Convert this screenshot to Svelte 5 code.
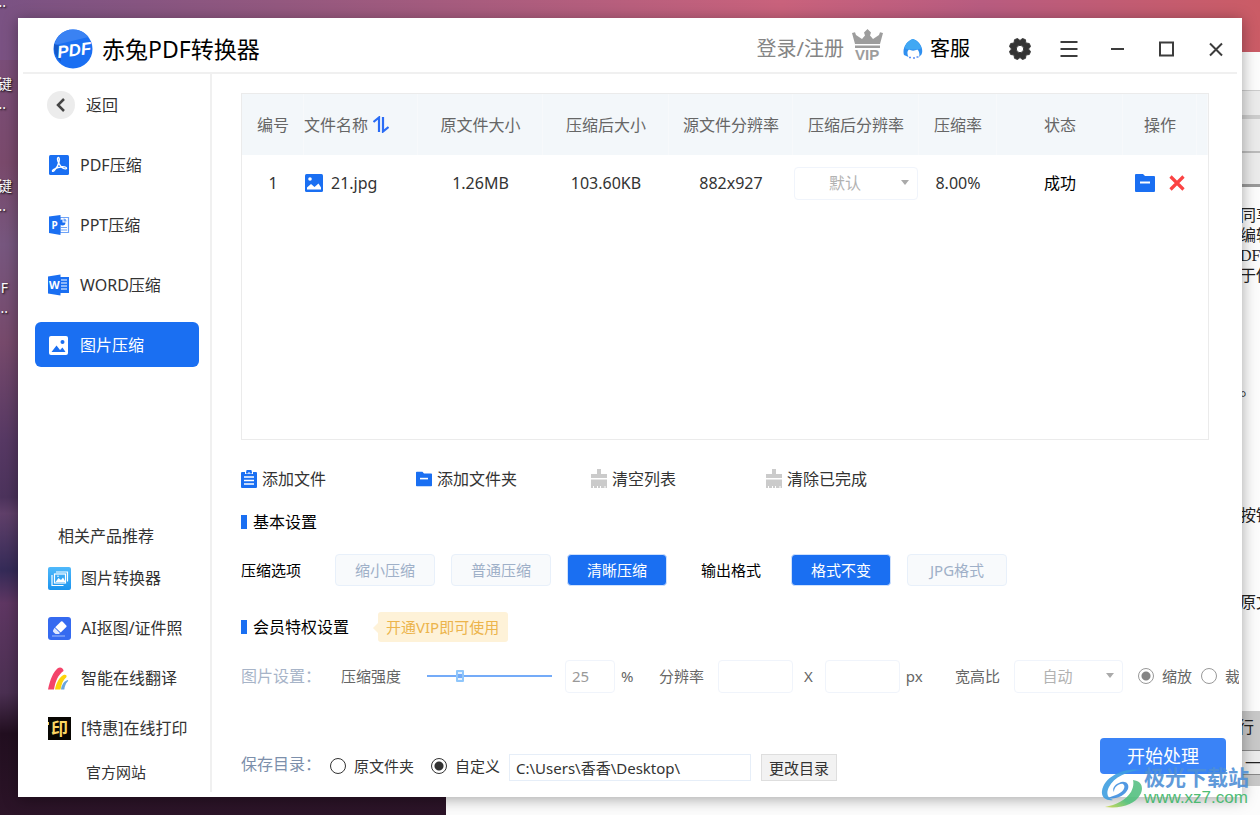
<script lang="ts">
  interface FileRow {
    name: string;
    size: string;
    compressed: string;
    resolution: string;
    ratio: string;
    status: string;
  }

  const files: FileRow[] = [
    {
      name: "21.jpg",
      size: "1.26MB",
      compressed: "103.60KB",
      resolution: "882x927",
      ratio: "8.00%",
      status: "成功",
    },
  ];

  const navItems = [
    { key: "pdf", label: "PDF压缩" },
    { key: "ppt", label: "PPT压缩" },
    { key: "word", label: "WORD压缩" },
    { key: "image", label: "图片压缩" },
  ];

  const products = [
    { key: "convert", label: "图片转换器" },
    { key: "cutout", label: "AI抠图/证件照" },
    { key: "translate", label: "智能在线翻译" },
    { key: "print", label: "[特惠]在线打印" },
  ];

  const toolbar = [
    { icon: "clipboard", label: "添加文件" },
    { icon: "folder", label: "添加文件夹" },
    { icon: "brush", label: "清空列表" },
    { icon: "brush", label: "清除已完成" },
  ];

  const levels = ["缩小压缩", "普通压缩", "清晰压缩"];
  const formats = ["格式不变", "JPG格式"];

  let activeNav: string = $state("image");
  let level: string = $state("清晰压缩");
  let format: string = $state("格式不变");
  let strength: number = $state(25);
  let width: string = $state("");
  let height: string = $state("");
  let resize: string = $state("scale");
  let target: string = $state("custom");
  let savePath: string = $state("C:\\Users\\香香\\Desktop\\");
</script>

{#snippet folderIcon(size: number)}
  <svg width={size} height={size} viewBox="0 0 20 20">
    <path d="M1 1h7l2 2h9q1 0 1 1v14q0 1-1 1H1q-1 0-1-1V2q0-1 1-1z" fill="#1a6ff2" />
    <path d="M5 9.5h10" stroke="#fff" stroke-width="2" />
  </svg>
{/snippet}

{#snippet navIcon(key: string)}
  <svg width="22" height="22" viewBox="0 0 22 22">
    {#if key === "pdf"}
      <rect x="1" y="1" width="20" height="20" rx="1.5" fill="#1a6ff2" />
      <path
        d="M10.5 3.5c-1.500 0-1.200 3 .2 5.500 1.800 3.500 4 5.800 6.500 5.900 1.800 0 1.800-1.600-.4-2-3.500-.6-8.500.8-11.300 2.600-1.900 1.300-1 2.700.6 1.300 2-1.900 4.200-5.800 4.900-8.800.4-2 .5-4.300-.5-4.500z"
        fill="none"
        stroke="#fff"
        stroke-width="1.4"
      />
    {:else if key === "ppt"}
      <path d="M12 3.500h8.500v15H12z" fill="#fff" stroke="#6fa3f7" stroke-width="1.200" />
      <path d="M14.500 5.500a3 3 0 1 0 3 3h-3z" fill="#1a6ff2" />
      <path d="M15.500 4.600a3 3 0 0 1 3 3h-3z" fill="#6fa3f7" />
      <path d="M13 13.500h6M13 16h6" stroke="#6fa3f7" stroke-width="1.200" />
      <path d="M1 2.500L12.500 1v20L1 19z" fill="#1a6ff2" />
      <text x="3.500" y="14.500" font-size="10" font-weight="700" fill="#fff">P</text>
    {:else if key === "word"}
      <path d="M12 3h9v16h-9z" fill="#1a6ff2" />
      <path d="M13 6h6M13 9h6M13 12h6M13 15h6" stroke="#fff" stroke-width="1.200" />
      <path d="M0 2.500L12.500 0.500v21L0 19.500z" fill="#1a6ff2" />
      <text x="1" y="14.500" font-size="11" font-weight="700" fill="#fff">W</text>
    {:else}
      <rect x="1" y="2" width="19" height="19" rx="2" fill="#fff" />
      <circle cx="14.500" cy="8" r="2" fill="#1a6ff2" />
      <path d="M3.500 18l5-6.500 3.500 4.500 2.500-2.500 3 4.500z" fill="#1a6ff2" />
    {/if}
  </svg>
{/snippet}

{#snippet productIcon(key: string)}
  <svg width="23" height="23" viewBox="0 0 23 23">
    {#if key === "convert"}
      <defs>
        <linearGradient id="sky" x2="0" y2="1">
          <stop offset="0" stop-color="#4fb9fb" />
          <stop offset="1" stop-color="#1b94ee" />
        </linearGradient>
      </defs>
      <rect width="23" height="23" rx="2" fill="url(#sky)" />
      <path d="M8 5h11.500v9.500M4 8v10.500h11.500" fill="none" stroke="#fff" stroke-width="1.200" />
      <rect x="6.500" y="7" width="11" height="9" fill="none" stroke="#fff" stroke-width="1.200" />
      <path d="M7.500 15l3-4 2.500 2 2-2.500 2.500 4.500z" fill="#fff" />
      <circle cx="10" cy="9.300" r="0.800" fill="#fff" />
    {:else if key === "cutout"}
      <rect width="23" height="23" rx="3" fill="#356af0" />
      <path d="M13 4.500q.8-.6 1.500.1l3.800 3.900q.6.700 0 1.400l-5.600 5.600-5.500-5.300z" fill="#fff" />
      <path d="M6.600 10.800l5.400 5.300-1 1H7.500l-2.200-2.200q-.8-.9 0-1.800z" fill="#dfe8ff" />
      <path d="M4 19h13" stroke="#8fb0fa" stroke-width="1.200" />
    {:else if key === "translate"}
      <path d="M0 22.500C2 13 5 5 10 1c2.500-1.500 5.800.2 5.500 3C10 8 7.500 14 6 22.500z" fill="#f4446a" />
      <path d="M7 22.500c1-6 4-12 8.500-14.500 2-.8 3.500 0 3 2-3.500 3-5 7-6 12.500z" fill="#fdd30b" />
      <path d="M13 22.500c.5-4 2.500-8 6.500-9.500q1.500.5-.3 2c-1.700 2-2.500 4.500-2.900 7.500z" fill="#6ba6dc" />
    {:else}
      <rect width="23" height="23" fill="#080602" />
      <text x="3" y="18" font-size="17" font-weight="700" fill="#fbd663">印</text>
      <path d="M0 5h1v3H0z" fill="#fbd663" />
    {/if}
  </svg>
{/snippet}

{#snippet toolIcon(icon: string)}
  {#if icon === "folder"}
    {@render folderIcon(16)}
  {:else if icon === "clipboard"}
    <svg width="16" height="18" viewBox="0 0 16 18">
      <path d="M1 2h3v2h8V2h3q1 0 1 1v14q0 1-1 1H1q-1 0-1-1V3q0-1 1-1z" fill="#1a6ff2" />
      <path d="M5 2.500h1.500V1h3v1.500H11" fill="none" stroke="#1a6ff2" stroke-width="2" />
      <path d="M3 7h10M3 10.500h10M3 14h10" stroke="#fff" stroke-width="1.300" />
    </svg>
  {:else}
    <svg width="16" height="20" viewBox="0 0 16 20">
      <path d="M6 0h4v5h6v4H0V5h6zM0 10.500h16V19h-1.500v-2h-1v2H10v-2H9v2H7v-2H6v2H3v-2H2v2H0z" fill="#cbcbcb" />
    </svg>
  {/if}
{/snippet}

<div class="desktop">
  <div class="shortcuts">
    {#each ["键", "键", "键", "F"] as name}
      <span class="shortcut">{name}<span class="more">..</span></span>
    {/each}
  </div>

  <div class="back-window">
    <div class="peek">
      <div class="strip tabs"></div>
      <div class="strip"></div>
      <div class="strip last"></div>
      <p class="doc">同享<br />编辑<br />DF转<br />于使</p>
      <p class="doc dot">。</p>
      <p class="doc press">按钮</p>
      <p class="doc source">原文</p>
      <div class="find">行</div>
      <div class="dash">—</div>
      <div class="status"></div>
    </div>
  </div>

  <div class="window">
    <header>
      <svg class="logo" width="40" height="40" viewBox="0 0 40 40">
        <circle cx="20" cy="20" r="19.500" fill="#1a6ff2" />
        <path d="M1 17C3 8 10 .500 20 .500c7 0 12 3 15.500 7.500L2 16z" fill="#3a82f3" />
        <path d="M1 15l5 1.500L8 33Q0 26 1 15z" fill="#1559c8" />
        <text x="4" y="27" font-size="17" transform="rotate(-7 20 20)">PDF</text>
      </svg>
      <h1>赤兔PDF转换器</h1>
      <a class="login" href="#login">登录/注册</a>
      <svg class="crown" width="31" height="33" viewBox="0 0 31 33">
        <path
          d="M0 5l3-.700 1 2.700 6 4 3-3.500-1-3L15.500 1l3.500 3.500-1 3L21 11l6-4 1-2.700 3 .700-3 11H3zM3 17.500h25V20H3z"
          fill="#9d9d9d"
        />
        <text x="3" y="32" font-size="15">VIP</text>
      </svg>
      <button class="support">
        <svg width="20" height="22" viewBox="0 0 20 22">
          <path
            d="M1 17C-1 11 3 3 10 1c7 2 11 10 8.500 15.500L16 19c1-3 0-6-1.500-7.500-3 1.500-6 1.500-8.500 0C4 13 4 16 5.500 19z"
            fill="#2f8ff0"
          />
          <path d="M1.500 10C3 5 6 2.500 10 1c4 1.500 7 4.500 8.300 9-2 2-14 2-16.800 0z" fill="#41a8f3" />
          <path d="M6 19.500h2M10 20h2M13.500 19h2" stroke="#5b8ff5" stroke-width="1.500" />
        </svg>
        客服
      </button>
      <div class="controls">
        <button aria-label="设置">
          <svg width="24" height="24" viewBox="0 0 24 24" fill="#333">
            <path
              fill-rule="evenodd"
              d="M9.500 1.500L12 3.500 14.500 1.500 17.500 2.700 17.800 5.900 21.300 6.500 22.500 9.500 20.500 12 22.500 14.500 21.300 17.500 18 18 17.500 21.300 14.500 22.500 12 20.500 9.500 22.500 6.500 21.300 6 18 2.700 17.500 1.500 14.500 3.500 12 1.500 9.500 2.700 6.500 6 6 6.500 2.700zM12 8.300a3.700 3.700 0 1 0 0 7.400 3.700 3.700 0 0 0 0-7.400z"
              stroke="#333"
              stroke-linejoin="round"
            />
          </svg>
        </button>
        <button aria-label="菜单">
          <svg width="24" height="24" viewBox="0 0 24 24"><path d="M3.500 5h17M3.500 12h17M3.500 19h17" /></svg>
        </button>
        <button aria-label="最小化">
          <svg width="24" height="24" viewBox="0 0 24 24"><path d="M5 12h13" /></svg>
        </button>
        <button aria-label="最大化">
          <svg width="24" height="24" viewBox="0 0 24 24"><path d="M5 5.500h13v13H5z" /></svg>
        </button>
        <button aria-label="关闭">
          <svg width="24" height="24" viewBox="0 0 24 24"><path d="M6 6.500l12 12M18 6.500l-12 12" /></svg>
        </button>
      </div>
    </header>

    <div class="body">
      <aside>
        <button class="back">
          <svg width="28" height="28" viewBox="0 0 28 28">
            <circle cx="14" cy="14" r="14" fill="#ececec" />
            <path d="M17 8l-6 6 6 6" fill="none" stroke="#444" stroke-width="2.500" />
          </svg>
          返回
        </button>
        <nav>
          {#each navItems as item}
            <button class="nav-item" class:active={item.key === activeNav} onclick={() => (activeNav = item.key)}>
              {@render navIcon(item.key)}
              {item.label}
            </button>
          {/each}
        </nav>

        <div class="related">
          <h2>相关产品推荐</h2>
          {#each products as product}
            <a class="product" href="#{product.key}">
              {@render productIcon(product.key)}
              {product.label}
            </a>
          {/each}
          <a class="site" href="#site">官方网站</a>
        </div>
      </aside>

      <main>
        <div class="table-box">
          <table>
            <colgroup>
              <col style="width: 62px" />
              <col style="width: 114px" />
              <col style="width: 125px" />
              <col style="width: 126px" />
              <col style="width: 124px" />
              <col style="width: 126px" />
              <col style="width: 78px" />
              <col style="width: 126px" />
              <col style="width: 74px" />
              <col style="width: 11px" />
            </colgroup>
            <thead>
              <tr>
                <th>编号</th>
                <th class="name">
                  <span class="with-icon sort">
                    文件名称
                    <svg width="16" height="17" viewBox="0 0 16 17" fill="none" stroke="#2a6cf5" stroke-width="2.200">
                      <path d="M0.500 6L6 1.500V16M15.500 11L10 15.500V1" />
                    </svg>
                  </span>
                </th>
                <th>原文件大小</th>
                <th>压缩后大小</th>
                <th>源文件分辨率</th>
                <th>压缩后分辨率</th>
                <th>压缩率</th>
                <th>状态</th>
                <th>操作</th>
                <th></th>
              </tr>
            </thead>
            <tbody>
              {#each files as file, i}
                <tr>
                  <td>{i + 1}</td>
                  <td class="name">
                    <span class="with-icon">
                      <svg width="20" height="20" viewBox="0 0 20 20">
                        <rect x="1" y="1" width="18" height="18" rx="1.500" fill="#1a6ff2" />
                        <circle cx="6" cy="6" r="1.800" fill="#fff" />
                        <path d="M3 16.500v-2l4-3.500 3.500 3 4-3.500 2.500 4v2z" fill="#fff" />
                      </svg>
                      {file.name}
                    </span>
                  </td>
                  <td>{file.size}</td>
                  <td>{file.compressed}</td>
                  <td>{file.resolution}</td>
                  <td class="pick">
                    <span class="select">
                      <select aria-label="压缩后分辨率"><option>默认</option></select>
                    </span>
                  </td>
                  <td>{file.ratio}</td>
                  <td class="status-cell">{file.status}</td>
                  <td>
                    <span class="actions">
                      <button aria-label="打开文件夹">{@render folderIcon(20)}</button>
                      <button aria-label="删除">
                        <svg width="16" height="16" viewBox="0 0 16 16">
                          <path d="M1.500 1.500l13 13M14.500 1.500l-13 13" stroke="#fb4343" stroke-width="3.200" />
                        </svg>
                      </button>
                    </span>
                  </td>
                  <td></td>
                </tr>
              {/each}
            </tbody>
          </table>
        </div>

        <div class="toolbar">
          {#each toolbar as tool}
            <button>
              {@render toolIcon(tool.icon)}
              {tool.label}
            </button>
          {/each}
        </div>

        <h3 class="section">基本设置</h3>

        <div class="options">
          <span class="caption">压缩选项</span>
          <div class="choices">
            {#each levels as item}
              <button class="choice" class:chosen={item === level} onclick={() => (level = item)}>{item}</button>
            {/each}
          </div>
          <span class="caption">输出格式</span>
          <div class="choices">
            {#each formats as item}
              <button class="choice" class:chosen={item === format} onclick={() => (format = item)}>{item}</button>
            {/each}
          </div>
        </div>

        <div class="vip-title">
          <h3 class="section">会员特权设置</h3>
          <button class="vip-tag">开通VIP即可使用</button>
        </div>

        <div class="settings">
          <span class="row-label">图片设置：</span>
          <div class="field strength">
            <label for="strength">压缩强度</label>
            <input id="strength" type="range" min="0" max="100" bind:value={strength} />
            <input class="box small" type="text" aria-label="压缩强度百分比" bind:value={strength} />
            <span class="unit">%</span>
          </div>
          <div class="field resolution">
            <label for="width">分辨率</label>
            <input id="width" class="box" type="text" bind:value={width} />
            <span class="times">X</span>
            <input class="box" type="text" aria-label="高度" bind:value={height} />
            <span class="unit">px</span>
          </div>
          <div class="field ratio">
            <label for="aspect">宽高比</label>
            <span class="select">
              <select id="aspect"><option>自动</option></select>
            </span>
          </div>
          <label class="radio"><input type="radio" name="resize" value="scale" bind:group={resize} />缩放</label>
          <label class="radio"><input type="radio" name="resize" value="crop" bind:group={resize} />裁剪</label>
        </div>

        <footer>
          <span class="row-label">保存目录：</span>
          <label class="radio"><input type="radio" name="target" value="source" bind:group={target} />原文件夹</label>
          <label class="radio"><input type="radio" name="target" value="custom" bind:group={target} />自定义</label>
          <input class="path" type="text" aria-label="保存目录" bind:value={savePath} />
          <button class="change">更改目录</button>
          <button class="start">开始处理</button>
        </footer>
      </main>
    </div>
  </div>

  <div class="watermark">
    <svg width="42" height="40" viewBox="0 0 42 40">
      <defs>
        <linearGradient id="leaf" x1="1" x2="0" y2="1">
          <stop offset="0" stop-color="#5cc08a" />
          <stop offset="0.600" stop-color="#4fc07a" />
          <stop offset="1" stop-color="#d3da4a" />
        </linearGradient>
      </defs>
      <path d="M41 2C24-1 3 8 1 23c-1 7 5 10 11 9C6 30 5 25 8 19 13 9 26 3 41 2z" fill="#3f9fe0" />
      <path d="M7 30c7 2 17-2 20-9 2-6-4-9-9-6-5 2-7 6-5 9 0-5 5-9 9-8 4 3-1 9-7 11-3 1-6 2-8 3z" fill="#3f8fe0" />
      <path d="M32 12c9 1 11 8 7 15-5 9-18 14-35 12 11-2 21-7 26-15 2-4 3-8 2-12z" fill="url(#leaf)" />
    </svg>
    <div>
      <div class="mark-name">极光下载站</div>
      <div class="mark-url">www.xz7.com</div>
    </div>
  </div>
</div>

<style>
  :global(body) {
    margin: 0;
  }

  .desktop {
    position: relative;
    box-sizing: border-box;
    min-height: 100vh;
    padding: 18px;
    overflow: hidden;
    display: flex;
    font-family: "Noto Sans", "Noto Sans CJK SC", sans-serif;
    font-size: 16px;
    line-height: 20px;
    color: #333;
    background:
      linear-gradient(90deg, #7a5283, #93587f 22%, #c9627c 62%, #b85c80 78%, #cb5c66) 0 0 / 100% 60px no-repeat,
      linear-gradient(
        #7a5080,
        #7a4a6c 20%,
        #77577f 30%,
        #774a6c 42%,
        #573964 54%,
        #4c335c 61%,
        #60406a 63%,
        #352b58 70%,
        #5f3763 74%,
        #4b3052 85%,
        #220f20 90%,
        #2c1428
      );
  }

  h1,
  h2,
  h3,
  p {
    margin: 0;
    font-weight: 400;
  }

  button {
    padding: 0;
    border: none;
    background: none;
    font: inherit;
    color: inherit;
    cursor: pointer;
  }

  input,
  select {
    box-sizing: border-box;
    margin: 0;
    font: inherit;
    color: inherit;
  }

  a {
    color: inherit;
    text-decoration: none;
  }

  svg {
    display: block;
    flex: none;
  }

  .shortcuts {
    position: absolute;
    left: -8px;
    top: -28px;
    width: 20px;
    display: flex;
    flex-direction: column;
    gap: 62px;
    color: #fff;
    text-shadow: 1px 1px 2px #000;
  }

  .shortcut {
    font-size: 14px;
    text-align: right;
  }

  .shortcut:last-child {
    padding-right: 4px;
  }

  .more {
    display: block;
    padding-right: 6px;
  }

  .shortcut:last-child .more {
    padding-right: 0;
  }

  .back-window {
    position: absolute;
    left: 446px;
    right: 0;
    top: 52px;
    bottom: 0;
    display: flex;
    justify-content: flex-end;
    background: #fcfcfc;
  }

  .peek {
    width: 22px;
    padding-top: 38px;
    overflow: hidden;
    white-space: nowrap;
    color: #222;
  }

  .strip {
    box-sizing: border-box;
    height: 34px;
    border-bottom: 2px solid #bbb;
    background: #ebebeb;
  }

  .strip.tabs {
    height: 29px;
    border-top: 1px solid #ccc;
    border-bottom: 4px solid #ccc;
  }

  .strip.last {
    border-bottom: 3px solid #999;
  }

  .doc {
    margin-top: 19px;
    padding-left: 2px;
    font-family: "Liberation Serif", "Noto Sans CJK SC", serif;
  }

  .doc.dot {
    margin-top: 94px;
  }

  .doc.press {
    margin-top: 106px;
  }

  .doc.source {
    margin-top: 67px;
  }

  .find {
    box-sizing: border-box;
    height: 39px;
    margin-top: 98px;
    padding-top: 6px;
    background: #c8c8c8;
  }

  .dash {
    height: 23px;
    padding-left: 7px;
    border: solid #888;
    border-width: 1px 0;
    background: #ebebeb;
  }

  .status {
    height: 11px;
    background: #c8c8c8;
  }

  .window {
    position: relative;
    flex: 1;
    min-width: 0;
    display: flex;
    flex-direction: column;
    background: #fff;
    box-shadow: 0 2px 14px rgba(0, 0, 0, 0.35);
  }

  header {
    box-sizing: border-box;
    display: flex;
    align-items: center;
    height: 56px;
    margin: 0 5px;
    padding: 7px 9px 0 30px;
    border-bottom: 2px solid #f0f0f0;
  }

  .logo text {
    font-family: "Liberation Sans", sans-serif;
    font-weight: 700;
    font-style: italic;
    fill: #fff;
  }

  h1 {
    margin-left: 9px;
    font-size: 23px;
    line-height: 32px;
    color: #000;
  }

  .login {
    margin-left: auto;
    font-size: 20px;
    line-height: 28px;
    color: #858585;
  }

  .crown {
    margin: -8px 20px 0 8px;
  }

  .crown text {
    font-family: "Liberation Sans", sans-serif;
    font-weight: 700;
    fill: #9d9d9d;
  }

  .support {
    display: flex;
    align-items: center;
    gap: 7px;
    font-size: 20px;
    line-height: 28px;
    color: #000;
  }

  .controls {
    display: flex;
    gap: 25px;
    margin-left: 38px;
  }

  .controls path {
    fill: none;
    stroke: #3c3c3c;
    stroke-width: 2;
  }

  .controls button:first-child path {
    fill: #333;
    stroke-width: 1;
  }

  .body {
    flex: 1;
    display: flex;
  }

  aside {
    box-sizing: border-box;
    flex: none;
    width: 194px;
    margin-bottom: 5px;
    padding: 8px 11px 0 17px;
    border-right: 2px solid #f0f0f0;
    display: flex;
    flex-direction: column;
  }

  .back {
    display: flex;
    align-items: center;
    gap: 11px;
    height: 45px;
    padding-left: 12px;
  }

  nav {
    display: flex;
    flex-direction: column;
    gap: 15px;
    margin-top: 15px;
  }

  .nav-item {
    display: flex;
    align-items: center;
    gap: 10px;
    height: 45px;
    padding-left: 13px;
    border-radius: 6px;
  }

  .nav-item.active {
    background: #1a6ff2;
    color: #fff;
  }

  .related {
    margin-top: auto;
    padding-left: 13px;
    display: flex;
    flex-direction: column;
  }

  h2 {
    padding-left: 10px;
    font-size: 16px;
    line-height: 34px;
  }

  .product {
    display: flex;
    align-items: center;
    gap: 10px;
    height: 50px;
    white-space: nowrap;
  }

  .site {
    padding-left: 38px;
    font-size: 15px;
    line-height: 39px;
  }

  main {
    flex: 1;
    min-width: 0;
    display: flex;
    flex-direction: column;
    padding: 19px 0 16px 29px;
  }

  .table-box {
    flex: 1;
    min-height: 200px;
    margin-right: 33px;
    border: 1px solid #ebebeb;
  }

  table {
    width: 100%;
    table-layout: fixed;
    border-collapse: separate;
    border-spacing: 0;
  }

  th,
  td {
    padding: 0;
    text-align: center;
    white-space: nowrap;
  }

  th {
    height: 61px;
    font-weight: 400;
    color: #666;
    background: #f3f7fa;
    box-shadow: inset -1px 0 #f7f9fb;
  }

  td {
    height: 56px;
  }

  .with-icon {
    display: flex;
    align-items: center;
    gap: 7px;
  }

  .sort {
    gap: 5px;
  }

  .status-cell {
    color: #000;
  }

  .pick .select {
    width: 124px;
  }

  .actions {
    display: flex;
    justify-content: center;
    align-items: center;
    gap: 14px;
  }

  .select {
    position: relative;
    display: inline-block;
    vertical-align: middle;
  }

  .select select {
    display: block;
    width: 100%;
    height: 33px;
    padding: 0 22px 0 0;
    border: 1px solid #f0f4fb;
    border-radius: 4px;
    background: #fff;
    appearance: none;
    text-align: center;
    text-align-last: center;
    color: #b2b2b2;
  }

  .select::after {
    content: "";
    position: absolute;
    right: 9px;
    top: 13px;
    border: solid transparent;
    border-width: 5px 4px 0;
    border-top-color: #aaa;
  }

  .toolbar {
    display: flex;
    margin-top: 24px;
  }

  .toolbar button {
    display: flex;
    align-items: center;
    gap: 5px;
    width: 175px;
    height: 30px;
  }

  .section {
    display: flex;
    align-items: center;
    gap: 6px;
    height: 32px;
    margin-top: 12px;
    font-size: 16px;
    color: #000;
  }

  .section::before {
    content: "";
    width: 6px;
    height: 14px;
    background: #1a6ff2;
  }

  .options {
    display: flex;
    align-items: center;
    gap: 34px;
    margin-top: 16px;
    font-size: 15px;
    color: #000;
  }

  .choices {
    display: flex;
    gap: 16px;
  }

  .choices + .caption {
    margin-right: -4px;
  }

  .choice {
    box-sizing: border-box;
    width: 100px;
    height: 32px;
    border: 1px solid #e8f0fa;
    border-radius: 4px;
    background: #f8fafc;
    color: #9fb0c8;
  }

  .choice.chosen {
    border-color: #cfe1fc;
    background: #1a6ff2;
    color: #fff;
  }

  .vip-title {
    display: flex;
    align-items: center;
    gap: 29px;
    margin-top: 25px;
  }

  .vip-title .section {
    margin-top: 0;
  }

  .vip-tag {
    position: relative;
    height: 30px;
    padding: 0 9px 0 8px;
    border-radius: 3px;
    background: #fef2d8;
    font-size: 15px;
    color: #ecb44c;
  }

  .vip-tag::before {
    content: "";
    position: absolute;
    left: -5px;
    top: 11px;
    border: solid transparent;
    border-width: 5px 5px 5px 0;
    border-right-color: #fef2d8;
  }

  .settings {
    display: flex;
    align-items: center;
    height: 34px;
    margin: 16px 3px 0 0;
    overflow: hidden;
    white-space: nowrap;
    font-size: 15px;
    color: #666;
  }

  .row-label {
    flex: none;
    width: 80px;
    font-size: 16px;
    color: #7c8fab;
  }

  .settings .row-label {
    color: #a7b4c8;
  }

  .field {
    flex: none;
    display: flex;
    align-items: center;
  }

  .field label {
    flex: none;
  }

  .strength {
    width: 293px;
    margin: 0 25px 0 20px;
  }

  .resolution {
    width: 268px;
    margin-right: 28px;
  }

  .ratio .select {
    width: 109px;
    margin: 0 15px 0 14px;
  }

  input[type="range"] {
    width: 125px;
    height: 12px;
    margin: 0 13px 0 26px;
    appearance: none;
    background: none;
  }

  input[type="range"]::-webkit-slider-runnable-track {
    height: 2px;
    background: #74abf8;
  }

  input[type="range"]::-webkit-slider-thumb {
    appearance: none;
    width: 8px;
    height: 12px;
    margin-top: -5px;
    border: 2px solid #8fc6fb;
    border-radius: 1px;
    background: linear-gradient(#e3f1ff 0 2px, #74abf8 2px 6px, #e3f1ff 6px);
  }

  .box {
    width: 75px;
    height: 33px;
    margin: 0 0 0 14px;
    padding: 0 7px;
    border: 1px solid #f0f4fb;
    border-radius: 4px;
    background: #fff;
  }

  .box.small {
    width: 50px;
    margin: 0;
    padding: 0 6px;
    color: #999;
  }

  .unit {
    margin-left: 6px;
  }

  .times {
    margin-left: 11px;
  }

  .times + .box {
    margin-left: 12px;
  }

  .radio {
    flex: none;
    display: flex;
    align-items: center;
    gap: 8px;
    margin-right: 9px;
  }

  .radio input {
    width: 16px;
    height: 16px;
    border: 1px solid #333;
    border-radius: 50%;
    appearance: none;
    background: #fff;
  }

  .radio input:checked {
    background: radial-gradient(#333 0 4px, #fff 5px);
  }

  .settings .radio input {
    border-color: #999;
  }

  .settings .radio input:checked {
    background: radial-gradient(#858585 0 4px, #fff 5px);
  }

  footer {
    display: flex;
    align-items: flex-end;
    height: 43px;
    margin: 45px 16px 0 0;
    font-size: 15px;
  }

  footer .row-label {
    padding-bottom: 7px;
    margin-right: 9px;
  }

  footer .radio {
    height: 30px;
    margin-right: 17px;
  }

  footer .radio + .radio {
    margin-right: 9px;
  }

  .path {
    width: 242px;
    height: 27px;
    padding: 0 6px;
    border: 1px solid #e6eef8;
    background: #fff;
  }

  .change {
    box-sizing: border-box;
    width: 76px;
    height: 27px;
    margin-left: 10px;
    border: 1px solid #dedede;
    background: #f2f2f2;
  }

  .start {
    align-self: flex-start;
    width: 126px;
    height: 36px;
    margin-left: auto;
    border-radius: 4px;
    background: #3a83f7;
    font-size: 18px;
    color: #fff;
  }

  .watermark {
    position: absolute;
    right: 11px;
    bottom: 7px;
    display: flex;
    align-items: flex-end;
    gap: 1px;
    opacity: 0.9;
    pointer-events: none;
  }

  .mark-name {
    font-size: 21px;
    font-weight: 700;
    line-height: 22px;
    color: #4f90d6;
  }

  .mark-url {
    font-family: "Liberation Sans", sans-serif;
    font-size: 17px;
    line-height: 20px;
    color: #3cb667;
  }
</style>
